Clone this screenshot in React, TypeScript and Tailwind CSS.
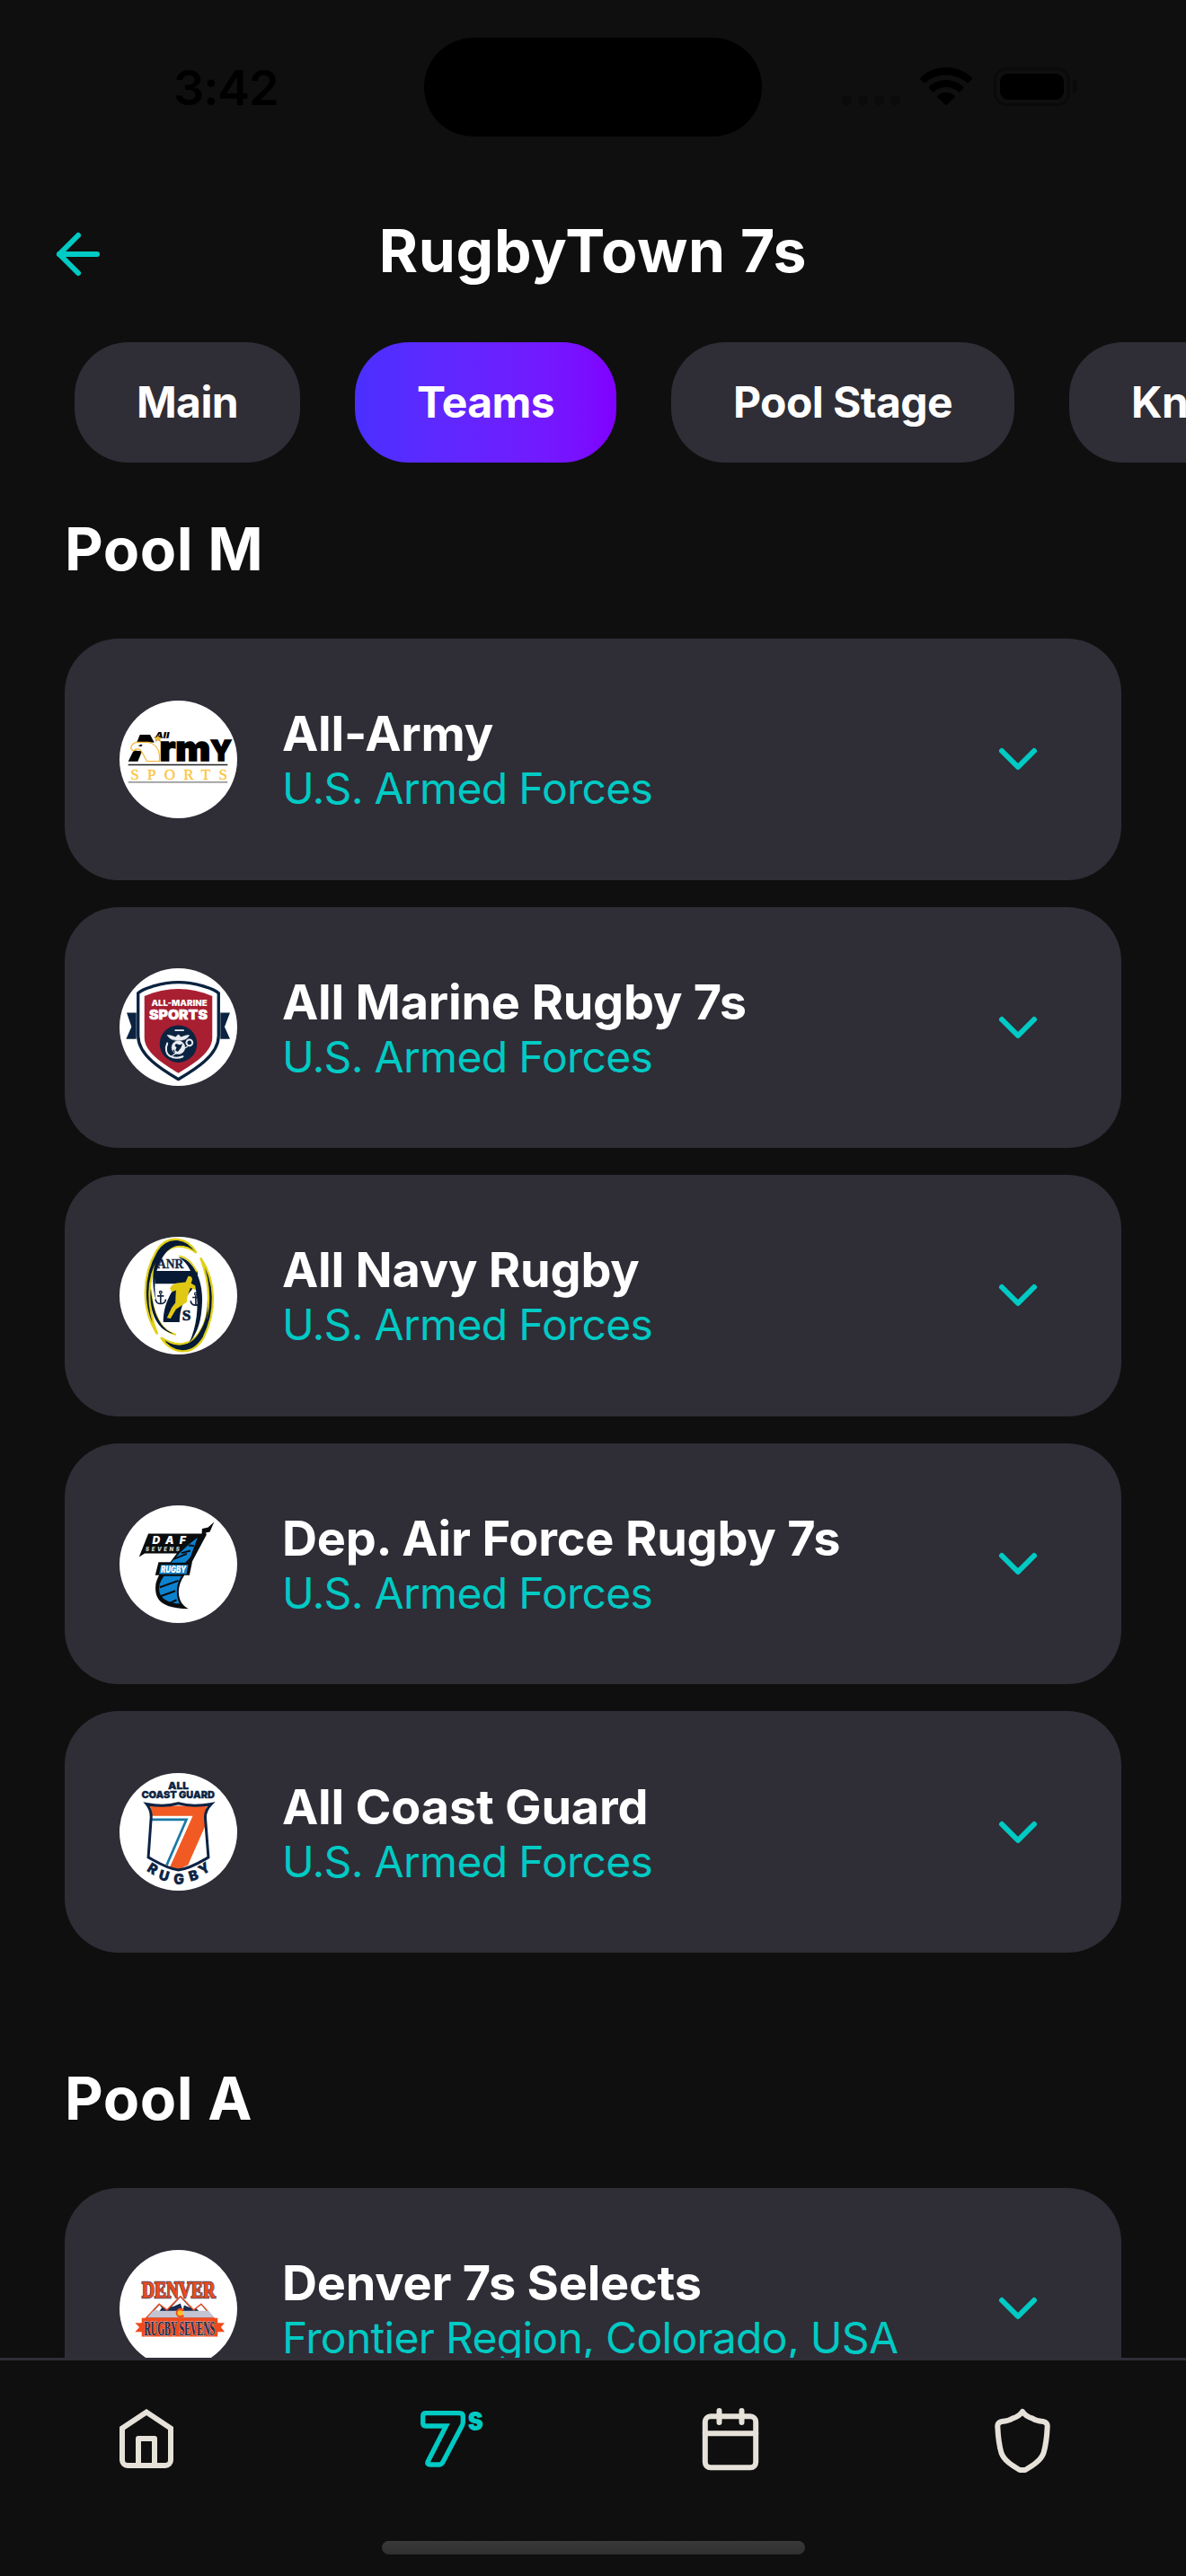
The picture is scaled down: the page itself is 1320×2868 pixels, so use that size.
import type { ReactNode } from "react";
import { ArrowLeft, ChevronDown } from "lucide-react";

const tabs = ["Main", "Teams", "Pool Stage", "Knockout"];

function Logo({ top, children }: { top: number; children: ReactNode }) {
  return (
    <svg
      viewBox={`70 ${top} 392 392`}
      className="size-[131px] shrink-0 rounded-full bg-white"
    >
      {children}
    </svg>
  );
}

function ArmyLogo() {
  return (
    <Logo top={60}>
      <path d="M138 174h34l14 26-24-2-34 0z" fill="#000" />
      <path d="M117 226l28 2-14 35h-32z" fill="#000" />
      <path
        d="M108 219c2-14 12-20 24-20h34c22 4 34 22 37 40v23h-42c-8-14-14-30-22-38-8-4-16-4-22 4-4-2-8-4-9-9z"
        fill="#fff"
        stroke="#f2b632"
        strokeWidth="3.5"
      />
      <path d="M132 210l10-4 5 3-6 4z" fill="#000" />
      <g fontFamily="Inter" fontWeight="900" stroke="#000" strokeWidth="4">
        <text x="203" y="260" fontSize="117" textLength="170" lengthAdjust="spacingAndGlyphs">
          rm
        </text>
        <text x="372" y="260" fontSize="92" textLength="72" lengthAdjust="spacingAndGlyphs">
          Y
        </text>
      </g>
      <text x="188" y="187" fontFamily="Inter" fontSize="28" fontWeight="900" fontStyle="italic" textLength="48" lengthAdjust="spacingAndGlyphs">
        All
      </text>
      <path d="M198 175l4 8 9 0-7 6 3 8-9-5-8 4 2-8-7-6 9 0z" fill="#f5c034" stroke="#6b4d00" strokeWidth="1" />
      <path d="M99 274h331" stroke="#222" strokeWidth="4" />
      <path d="M99 332h331" stroke="#777" strokeWidth="4" />
      <text x="107" y="322" fontFamily="Liberation Serif" fontSize="51" fill="#fdc43a" stroke="#fdc43a" textLength="322">
        SPORTS
      </text>
    </Logo>
  );
}

function MarineLogo() {
  return (
    <Logo top={55}>
      <path d="M94 203h32v88H92l18-41zM438 203h-32v88h32l-18-41z" fill="#0b2340" />
      <path
        d="M132 138c14-14 30-17 54-24 56-17 104-17 160 0 24 7 40 10 54 24v142c0 66-82 114-134 145-52-31-134-79-134-145z"
        fill="#fff"
        stroke="#0b2340"
        strokeWidth="10"
      />
      <path d="M153 148c74-32 152-32 226 0v138c0 48-60 86-113 118-53-32-113-70-113-118z" fill="#a81f31" />
      <text x="176" y="181" fontFamily="Inter" fontSize="27" fontWeight="900" fill="#fff" textLength="186" lengthAdjust="spacingAndGlyphs">
        ALL-MARINE
      </text>
      <text x="169" y="226" fontFamily="Inter" fontSize="43" fontWeight="900" fill="#fff" stroke="#fff" strokeWidth="1.5" textLength="194" lengthAdjust="spacingAndGlyphs">
        SPORTS
      </text>
      <circle cx="266" cy="307" r="62" fill="#0b2340" />
      <g fill="none" stroke="#e9edf2" strokeLinecap="round" strokeLinejoin="round">
        <path d="M256 262h27" strokeWidth="5" />
        <path d="M230 278c12 0 18 4 27 7l9-9 9 9c9-3 15-7 27-7-6 13-20 17-30 17h-12c-10 0-24-4-30-17z" fill="#e9edf2" strokeWidth="2" />
        <circle cx="266" cy="319" r="22" fill="#e9edf2" strokeWidth="2" />
        <path d="M229 305c-6 16-6 32 8 42 14 8 30 8 44 2" strokeWidth="6" />
        <path d="M230 306l-6 14M296 316l-50 30" strokeWidth="4" />
        <circle cx="303" cy="303" r="10" strokeWidth="6" strokeDasharray="4 2" />
      </g>
      <path d="M258 306l12 4 10-3-6 14-10 12-8-4 4-10-6-6zM250 324l6 12-8-4z" fill="#0b2340" />
    </Logo>
  );
}

function Anchor({ x, y }: { x: number; y: number }) {
  return (
    <g transform={`translate(${x} ${y})`} fill="none" stroke="#172640" strokeWidth="5">
      <circle cx="0" cy="-17" r="4" strokeWidth="4" />
      <path d="M0-12V20M-11-5H11M-17 6c1 11 9 15 17 15s16-4 17-15" />
    </g>
  );
}

function NavyLogo() {
  return (
    <Logo top={52}>
      <text x="196" y="158" fontFamily="Liberation Serif" fontSize="41" fontWeight="700" fill="#172640" stroke="#172640" textLength="87" lengthAdjust="spacingAndGlyphs">
        ANR
      </text>
      <path d="M188 166h142v42c-32 32-58 62-60 128h-54c0-62 26-96 44-128h-72z" fill="#071a35" />
      <path d="M299 183c10-2 16 8 12 16l-3 7 12 8 6-20 3 2-5 34-18-8-10 30-2 18-16 10-20 14-18 30-12-2 16-34 12-16 2-42-14 6-6-12c4-12 14-16 24-18l28-3z" fill="#e0c915" />
      <text x="279" y="331" fontFamily="Liberation Serif" fontSize="52" fontWeight="700" fill="#071a35" stroke="#071a35" strokeWidth="2">
        S
      </text>
      <Anchor x={207} y={254} />
      <Anchor x={324} y={259} />
      <path
        d="M326 105C298 54 232 40 194 98c-50 84-52 196 2 278-34-84-38-188 8-254 32-44 76-50 122-17z"
        fill="#071a35"
        stroke="#e0d019"
        strokeWidth="7"
      />
      <path d="M326 105C288 67 244 74 216 116c-26 40-34 86-24 150-18-60-12-118 10-160 32-54 82-46 124-1z" fill="#071a35" />
      <path
        d="M208 388c38 56 102 64 142 0 42-84 44-186-10-266 32 84 40 184-4 250-34 48-82 46-128 16z"
        fill="#071a35"
        stroke="#e0d019"
        strokeWidth="7"
      />
      <path d="M214 390c42 38 92 30 120-16 26-40 32-84 28-120 6 56-2 106-24 140-32 48-80 40-124-4z" fill="#071a35" />
      <path d="M266 120c54 4 88 90 78 170-4 60-24 94-42 116 24-54 34-120 22-180-8-48-24-88-58-106z" fill="#071a35" />
      <path d="M258 378c-46-8-78-64-84-152" fill="none" stroke="#e0d019" strokeWidth="6" />
      <path d="M250 374c-42-16-66-60-76-148-8 86 30 142 76 148z" fill="#071a35" />
      <path d="M268 116c28 4 46 24 60 54" fill="none" stroke="#e0d019" strokeWidth="5" />
    </Logo>
  );
}

function AirForceLogo() {
  return (
    <Logo top={61}>
      <path d="M166 155h178l1-16 20-5 20-18-14 33-14 3 3 6-49 92h1l-9 44h-17c-30 44-24 92 14 112-74-2-112-20-110-72 0-16 6-28 12-40h-13l11-44h39l22-29-107 0-19 12z" fill="#0a0c0e" />
      <path d="M330 168l-24 66-17 18h-47l30-34 28-26zM218 297h58c-22 36-16 70-6 92-46-4-68-22-68-50 0-18 8-30 16-42z" fill="#0d82cf" />
      <path d="M208 259h91l-6 31h-91z" fill="#1685cc" />
      <path d="M300 194l18 2M276 220l30-8M250 240l44-18M204 334l62-22M206 364l50-18M232 390l28-14" stroke="#0a0c0e" strokeWidth="6" />
      <g fontFamily="Inter" fontWeight="900" fontStyle="italic" fill="#fff">
        <text x="179" y="191" fontSize="36" textLength="112">
          DAF
        </text>
        <text x="157" y="214" fontSize="18" textLength="113" fill="#ccc">
          SEVENS
        </text>
        <text x="208" y="286" fontSize="29" textLength="84" lengthAdjust="spacingAndGlyphs">
          RUGBY
        </text>
      </g>
    </Logo>
  );
}

const arc = [
  { letter: "R", x: 172, y: 393, angle: 32 },
  { letter: "U", x: 214, y: 418, angle: 16 },
  { letter: "G", x: 268, y: 430, angle: 0 },
  { letter: "B", x: 321, y: 417, angle: -17 },
  { letter: "Y", x: 361, y: 392, angle: -33 },
];

function CoastGuardLogo() {
  return (
    <Logo top={60}>
      <g fontFamily="Inter" fontWeight="900" fill="#0c2344" stroke="#0c2344">
        <text x="232" y="114" fontSize="33" textLength="68" lengthAdjust="spacingAndGlyphs">
          ALL
        </text>
        <text x="143" y="145" fontSize="33" textLength="244" lengthAdjust="spacingAndGlyphs">
          COAST GUARD
        </text>
        {arc.map(({ letter, x, y, angle }) => (
          <text key={letter} x={x} y={y} fontSize="46" textAnchor="middle" transform={`rotate(${angle} ${x} ${y})`}>
            {letter}
          </text>
        ))}
      </g>
      <path d="M160 163c30 6 72 8 106-2 34 10 76 8 110 2-16 16-22 30-20 50l10 128c-24 14-62 38-100 42-38-4-74-28-100-42l9-128c2-20-2-34-15-50z" fill="#fff" />
      <path d="M170 169h191c-5 20-7 44-6 68l-57 130-32 15-28-9 76-170H178c0-14-2-24-8-34z" fill="#f15a22" />
      <path d="M178 215h115l-66 152" fill="none" stroke="#1b79a5" strokeWidth="8" />
      <path d="M160 163c30 6 72 8 106-2 34 10 76 8 110 2-16 16-22 30-20 50l10 128c-24 14-62 38-100 42-38-4-74-28-100-42l9-128c2-20-2-34-15-50z" fill="none" stroke="#0c2344" strokeWidth="9" />
    </Logo>
  );
}

function DenverLogo() {
  return (
    <Logo top={47}>
      <text x="145" y="206" fontFamily="Liberation Serif" fontWeight="700" fontSize="78" fill="#f04a16" stroke="#7a4a55" strokeWidth="7" paintOrder="stroke" textLength="244" lengthAdjust="spacingAndGlyphs">
        DENVER
      </text>
      <path d="M158 274l44-47 26 20 45-46 44 46 25-20 42 47z" fill="#172b4f" stroke="#ef4a1d" strokeWidth="4" />
      <path d="M273 205l-30 32 8-2 22-10 8 24 4-18 20 8zM203 230l-22 24 14-6 2 10 14-18zM342 230l-16 12 16 16 6-8 16 6z" fill="#fff" />
      <path d="M182 250h185l18 22H162z" fill="#c3c4d2" />
      <path d="M122 290h298l-12 14 12 16H122l14-16z" fill="#f04a1d" />
      <path d="M144 274h253v62H144z" fill="#f04a1d" />
      <text x="152" y="331" fontFamily="Liberation Serif" fontWeight="700" fontSize="68" fill="#1a2c4d" stroke="#d5c8cc" strokeWidth="3" paintOrder="stroke" textLength="236" lengthAdjust="spacingAndGlyphs">
        RUGBY SEVENS
      </text>
      <path d="M286 247a16 16 0 1 0 0 20l-8-6v-8z" fill="#f04a1d" />
      <circle cx="272" cy="257" r="9" fill="#fdc31d" />
    </Logo>
  );
}

const pools = [
  {
    name: "Pool M",
    teams: [
      { name: "All-Army", region: "U.S. Armed Forces", logo: <ArmyLogo /> },
      { name: "All Marine Rugby 7s", region: "U.S. Armed Forces", logo: <MarineLogo /> },
      { name: "All Navy Rugby", region: "U.S. Armed Forces", logo: <NavyLogo /> },
      { name: "Dep. Air Force Rugby 7s", region: "U.S. Armed Forces", logo: <AirForceLogo /> },
      { name: "All Coast Guard", region: "U.S. Armed Forces", logo: <CoastGuardLogo /> },
    ],
  },
  {
    name: "Pool A",
    teams: [
      { name: "Denver 7s Selects", region: "Frontier Region, Colorado, USA", logo: <DenverLogo /> },
    ],
  },
];

function StatusBar() {
  return (
    <div className="grid h-[194px] shrink-0 grid-cols-[472px_376px_472px] text-black">
      <div className="pt-[65px] pl-[193px] text-[54px] leading-[66px] font-semibold tracking-[-1.2px]">3:42</div>
      <div className="mt-[42px] h-[110px] rounded-full bg-black" />
      <div className="flex items-start pt-[75px] pl-[89px]">
        <div className="mt-[31px] flex gap-[7px]">
          <i className="size-[11px] rounded-full bg-[#0b0b0b]" />
          <i className="size-[11px] rounded-full bg-[#0b0b0b]" />
          <i className="size-[11px] rounded-full bg-[#0b0b0b]" />
          <i className="size-[11px] rounded-full bg-[#0b0b0b]" />
        </div>
        <svg viewBox="0 0 58 42" className="ml-[22px] h-[42px] w-[58px]">
          <path d="M29 0C40 0 50 4 57.500 11.500q1 1 0 2l-3.500 3.500q-1 1-2 0C45.500 11.500 37.500 8.500 29 8.500S12.500 11.500 6 17q-1 1-2 0L.500 13.500q-1-1 0-2C8 4 18 0 29 0z" />
          <path d="M29 14c7.500 0 14 2.800 19 7.500q1 1 0 2L44.500 27q-1 1-2 0C39 24 34 22 29 22s-10 2-13.500 5q-1 1-2 0L10 23.500q-1-1 0-2C15 16.800 21.500 14 29 14z" />
          <path d="M29 28c4 0 7 1.300 9.500 3.500q1 1 0 2L30 41.500q-1 1-2 0l-8.500-8q-1-1 0-2C22 29.300 25 28 29 28z" />
        </svg>
        <div className="ml-[24px] h-[43px] w-[85px] rounded-[14px] border-3 border-[#0a0a0a] p-1">
          <div className="h-full rounded-[9px] bg-black" />
        </div>
        <div className="mt-[14px] ml-[3px] h-[15px] w-[5px] rounded-r-full bg-[#0a0a0a]" />
      </div>
    </div>
  );
}

function BottomNav() {
  return (
    <nav className="h-[243px] shrink-0 border-t-3 border-[#2f2d36]">
      <div className="grid w-[1300px] grid-cols-4 justify-items-center pt-[53px] text-[#e6e1d9]">
        <svg viewBox="0 0 60 72" className="h-[72px] w-[60px]" fill="none" stroke="currentColor" strokeWidth="6">
          <path d="M3 22.500L30 4.500l27 18V58a6 6 0 0 1-6 6H9a6 6 0 0 1-6-6z" />
          <path d="M21 64V34h18v30" strokeLinejoin="round" />
        </svg>
        <svg viewBox="0 -3 70 72" className="ml-[31px] h-[72px] w-[70px] text-[#00cac4]">
          <path
            d="M6 2.700H43.500q3.800 0 3.800 3.800V12.500q0 2-1 4L25 57q-1.500 3-4.500 3H10.500q-4 0-2-4L28.500 17H6q-3.300 0-3.300-3.300V6q0-3.300 3.300-3.300z"
            fill="none"
            stroke="currentColor"
            strokeWidth="5.300"
          />
          <text x="52.500" y="21.500" fontFamily="Inter" fontSize="38" fontWeight="900" fill="currentColor" textLength="17.500" lengthAdjust="spacingAndGlyphs">
            s
          </text>
        </svg>
        <svg viewBox="0 0 64 72" className="h-[72px] w-[64px]" fill="none" stroke="currentColor" strokeWidth="6">
          <rect x="3.800" y="9.300" width="56.400" height="57" rx="6" />
          <path d="M3.800 28.300h56.400M19.500 3v13M44.500 3v13" strokeLinecap="round" />
        </svg>
        <svg viewBox="0 0 64 74" className="h-[74px] w-[64px]" fill="none" stroke="currentColor" strokeWidth="6">
          <path d="M32 4c3 4 7 6.500 11 7.500 3 2 7 3 12 3.500 3 .5 5 2.500 4.700 5.500-.5 11-1.700 21-4.200 29.500-3 8.500-12 14-20.500 19h-6C20.500 64 11.500 58.500 8.500 50 6 41.500 4.800 31.500 4.300 20.500 4 17.500 6 15.500 9 15c5-.5 9-1.500 12-3.500 4-1 8-3.500 11-7.500z" strokeLinejoin="round" />
        </svg>
      </div>
      <div className="mx-auto mt-[74px] h-[15px] w-[471px] rounded-full bg-linear-to-b from-[#393939] to-[#303030]" />
    </nav>
  );
}

export default function App() {
  return (
    <div className="flex h-[2868px] w-[1320px] flex-col overflow-hidden bg-[#0f0f0f] font-['Inter',sans-serif] text-white">
      <StatusBar />

      <header className="grid h-[187px] shrink-0 grid-cols-[200px_1fr_200px] items-center">
        <ArrowLeft className="mt-[-9px] ml-[51px] size-[72px] text-[#00cac4]" strokeWidth={2} />
        <h1 className="mt-[-17px] text-center text-[66px] leading-[80px] font-bold tracking-[0.7px]">RugbyTown 7s</h1>
      </header>

      <div className="flex shrink-0 gap-[61px] pl-[83px]">
        {tabs.map((tab) => (
          <button
            key={tab}
            className={
              tab === "Teams"
                ? "h-[134px] shrink-0 rounded-[60px] bg-linear-to-r from-[#4a30ff] to-[#8000ff] px-[69px] text-[48px] font-bold tracking-[-0.6px]"
                : "h-[134px] shrink-0 rounded-[60px] bg-[#2f2d36] px-[69px] text-[48px] font-bold tracking-[-0.6px]"
            }
          >
            {tab}
          </button>
        ))}
      </div>

      <main className="min-h-0 flex-1 overflow-hidden px-[72px] pt-[56px]">
        {pools.map((pool) => (
          <section key={pool.name} className="mb-[122px]">
            <h2 className="text-[66px] leading-[80px] font-bold tracking-[0.5px]">{pool.name}</h2>
            <div className="mt-[60px] flex flex-col gap-[30px]">
              {pool.teams.map((team) => (
                <div key={team.name} className="flex h-[268.6px] items-center rounded-[60px] bg-[#2f2d36] pr-[79px] pl-[61px]">
                  {team.logo}
                  <div className="ml-[50px] flex-1 pt-[2px]">
                    <p className="text-[54px] leading-[64px] font-bold tracking-[-0.2px]">{team.name}</p>
                    <p className="text-[48px] leading-[58px] tracking-[-0.7px] text-[#00cac4]">{team.region}</p>
                  </div>
                  <ChevronDown className="size-[72px] text-[#00cac4]" strokeWidth={2} />
                </div>
              ))}
            </div>
          </section>
        ))}
      </main>

      <BottomNav />
    </div>
  );
}
